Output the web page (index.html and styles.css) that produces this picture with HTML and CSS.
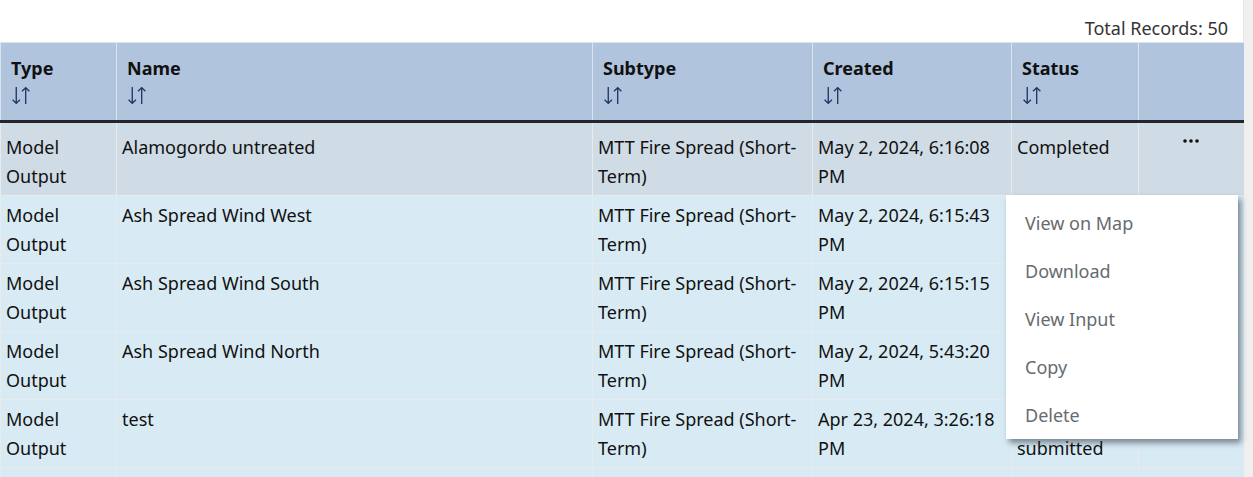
FILE: index.html
```html
<!DOCTYPE html>
<html>
<head>
<meta charset="utf-8">
<link rel="stylesheet" href="styles.css">
</head>
<body>
<div class="page">
  <div class="main">
    <div class="toolbar">Total Records: 50</div>
    <table class="grid">
      <colgroup>
        <col class="c-type"><col class="c-name"><col class="c-sub"><col class="c-created"><col class="c-status"><col class="c-act">
      </colgroup>
      <thead>
        <tr>
          <th><div class="hl">Type</div><svg class="sort" viewBox="0 0 20 18"><path d="M5 1V16.5M1.5 13L5 16.5L8.5 13M14 17V1.5M10.5 5L14 1.5L17.5 5"/></svg></th>
          <th><div class="hl">Name</div><svg class="sort" viewBox="0 0 20 18"><path d="M5 1V16.5M1.5 13L5 16.5L8.5 13M14 17V1.5M10.5 5L14 1.5L17.5 5"/></svg></th>
          <th><div class="hl">Subtype</div><svg class="sort" viewBox="0 0 20 18"><path d="M5 1V16.5M1.5 13L5 16.5L8.5 13M14 17V1.5M10.5 5L14 1.5L17.5 5"/></svg></th>
          <th><div class="hl">Created</div><svg class="sort" viewBox="0 0 20 18"><path d="M5 1V16.5M1.5 13L5 16.5L8.5 13M14 17V1.5M10.5 5L14 1.5L17.5 5"/></svg></th>
          <th><div class="hl">Status</div><svg class="sort" viewBox="0 0 20 18"><path d="M5 1V16.5M1.5 13L5 16.5L8.5 13M14 17V1.5M10.5 5L14 1.5L17.5 5"/></svg></th>
          <th></th>
        </tr>
      </thead>
      <tbody>
        <tr class="active">
          <td>Model Output</td><td>Alamogordo untreated</td><td>MTT Fire Spread (Short-Term)</td><td>May 2, 2024, 6:16:08 PM</td><td>Completed</td>
          <td class="act"><svg class="dots" viewBox="0 0 16 4"><circle cx="2" cy="2" r="1.8"/><circle cx="8" cy="2" r="1.8"/><circle cx="14" cy="2" r="1.8"/></svg></td>
        </tr>
        <tr>
          <td>Model Output</td><td>Ash Spread Wind West</td><td>MTT Fire Spread (Short-Term)</td><td>May 2, 2024, 6:15:43 PM</td><td>Completed</td><td></td>
        </tr>
        <tr>
          <td>Model Output</td><td>Ash Spread Wind South</td><td>MTT Fire Spread (Short-Term)</td><td>May 2, 2024, 6:15:15 PM</td><td>Completed</td><td></td>
        </tr>
        <tr>
          <td>Model Output</td><td>Ash Spread Wind North</td><td>MTT Fire Spread (Short-Term)</td><td>May 2, 2024, 5:43:20 PM</td><td>Completed</td><td></td>
        </tr>
        <tr>
          <td>Model Output</td><td>test</td><td>MTT Fire Spread (Short-Term)</td><td>Apr 23, 2024, 3:26:18 PM</td><td>Not yet submitted</td><td></td>
        </tr>
        <tr>
          <td></td><td></td><td></td><td></td><td></td><td></td>
        </tr>
      </tbody>
    </table>
    <ul class="menu">
      <li>View on Map</li>
      <li>Download</li>
      <li>View Input</li>
      <li>Copy</li>
      <li>Delete</li>
    </ul>
  </div>
  <div class="scroll"></div>
</div>
</body>
</html>
```

FILE: styles.css
```css
html, body {
  margin: 0;
  padding: 0;
  background: #ffffff;
  overflow: hidden;
}
body {
  font-family: "Noto Sans", "Open Sans", sans-serif;
  font-size: 18px;
  color: #111;
}
.page {
  display: flex;
  height: 477px;
  overflow: hidden;
}
.main {
  width: 1243px;
  position: relative;
}
.scroll {
  flex: 1;
  background: #f0f0f0;
  border-left: 1px solid #e6e6e6;
}
.toolbar {
  height: 42px;
  box-sizing: border-box;
  padding: 15px 15px 0 0;
  text-align: right;
  font-size: 18px;
  line-height: 26px;
  color: #333;
}
.grid {
  width: 1243px;
  border-collapse: collapse;
  table-layout: fixed;
}
.c-type { width: 116px; }
.c-name { width: 476px; }
.c-sub { width: 220px; }
.c-created { width: 199px; }
.c-status { width: 127px; }
.c-act { width: 105px; }
.grid th {
  background: #b0c4de;
  text-align: left;
  vertical-align: top;
  padding: 12px 10px 11px 10px;
  height: 54px;
  border-left: 1px solid #dbe3ee;
  border-top: 1px solid #dde3ea;
  border-bottom: 3px solid #23272b;
  font-weight: 700;
}
.hl {
  line-height: 27px;
  height: 27px;
}
.sort {
  display: block;
  width: 21px;
  height: 19px;
  margin-top: 4px;
  fill: none;
  stroke: #1b3563;
  stroke-width: 1.25;
}
.grid td {
  background: #d8ebf5;
  vertical-align: top;
  padding: 5px 5px 4px 5px;
  line-height: 29px;
  height: 58px;
  border-left: 1px solid #e8eaec;
  border-bottom: 1px solid #e8eaec;
}
.grid tbody tr:first-child td {
  padding-top: 10px;
}
.grid tr.active td {
  background: #cfdbe5;
}
.grid td.act {
  text-align: center;
}
.dots {
  display: block;
  width: 16px;
  height: 4px;
  fill: #111;
  margin: 6px auto 0;
}
.menu {
  position: absolute;
  left: 1006px;
  top: 195px;
  width: 232px;
  margin: 0;
  padding: 4px 0 0 0;
  list-style: none;
  background: #fff;
  box-shadow: 3px 4px 6px rgba(40, 50, 60, 0.55);
}
.menu li {
  height: 48px;
  line-height: 48px;
  padding-left: 19px;
  color: #666b70;
  font-size: 18px;
}
```
